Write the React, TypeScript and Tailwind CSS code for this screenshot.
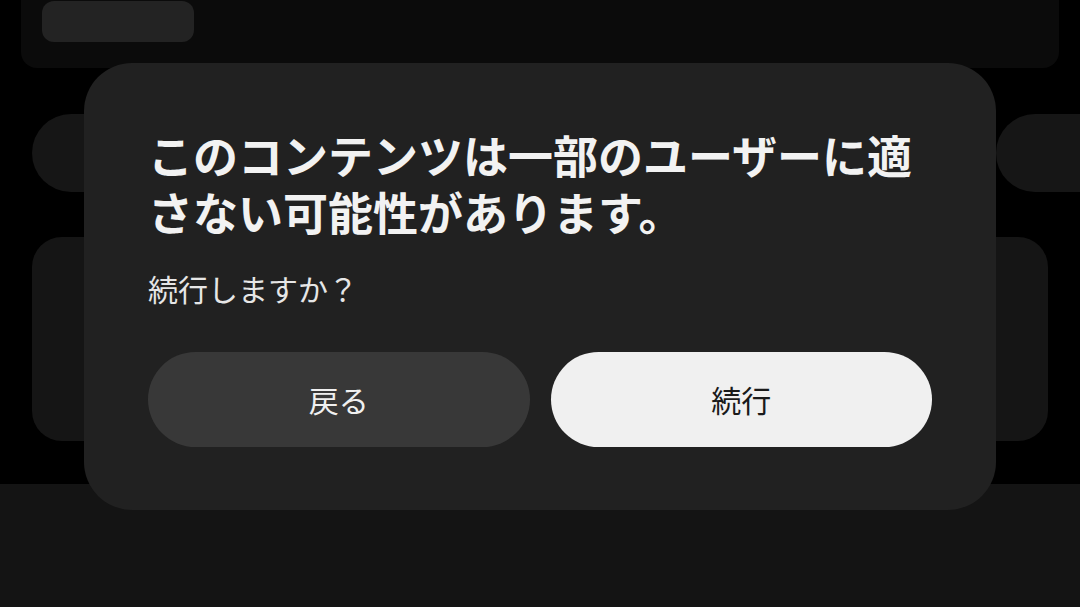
import React from "react";

export default function App() {
  const font = { fontFamily: '"Noto Sans CJK JP", "Noto Sans", sans-serif' };
  return (
    <div className="relative w-[1080px] h-[607px] overflow-hidden bg-black" style={font}>
      {/* background content */}
      <div className="flex flex-col">
        <div className="mx-[21px] -mt-[20px] h-[88px] rounded-[16px] bg-[#0b0b0b] pt-[21px] pl-[21px]">
          <div className="h-[41px] w-[152px] rounded-[12px] bg-[#232323]" />
        </div>
        <div className="mt-[46px] flex gap-[16px] overflow-hidden pl-[32px]">
          <div className="h-[78px] w-[300px] shrink-0 rounded-full bg-[#161616]" />
          <div className="h-[78px] w-[300px] shrink-0 rounded-full bg-[#161616]" />
          <div className="h-[78px] w-[316px] shrink-0 rounded-full bg-[#161616]" />
          <div className="h-[78px] w-[200px] shrink-0 rounded-full bg-[#161616]" />
        </div>
        <div className="mx-[32px] mt-[45px] h-[204px] rounded-[30px] bg-[#151515]" />
        <div className="mt-[43px] h-[123px] bg-[#141414]" />
      </div>

      {/* dialog */}
      <div className="absolute inset-0 flex items-start justify-center pt-[63px]">
        <div className="w-[912px] h-[447px] rounded-[48px] bg-[#212121] px-[64px] pt-[63px] flex flex-col">
          <h1 className="text-[45px] leading-[57px] font-bold text-[#f2f2f2]">
            このコンテンツは一部のユーザーに適さない可能性があります。
          </h1>
          <p className="mt-[28px] text-[30px] leading-[40px] text-[#e6e6e6]">続行しますか？</p>
          <div className="mt-[44px] flex gap-[21px]">
            <button className="h-[95px] flex-1 rounded-full bg-[#383838] text-[30px] text-[#f0f0f0]">
              戻る
            </button>
            <button className="h-[95px] flex-1 rounded-full bg-[#f0f0f0] text-[30px] text-[#1a1a1a]">
              続行
            </button>
          </div>
        </div>
      </div>
    </div>
  );
}
